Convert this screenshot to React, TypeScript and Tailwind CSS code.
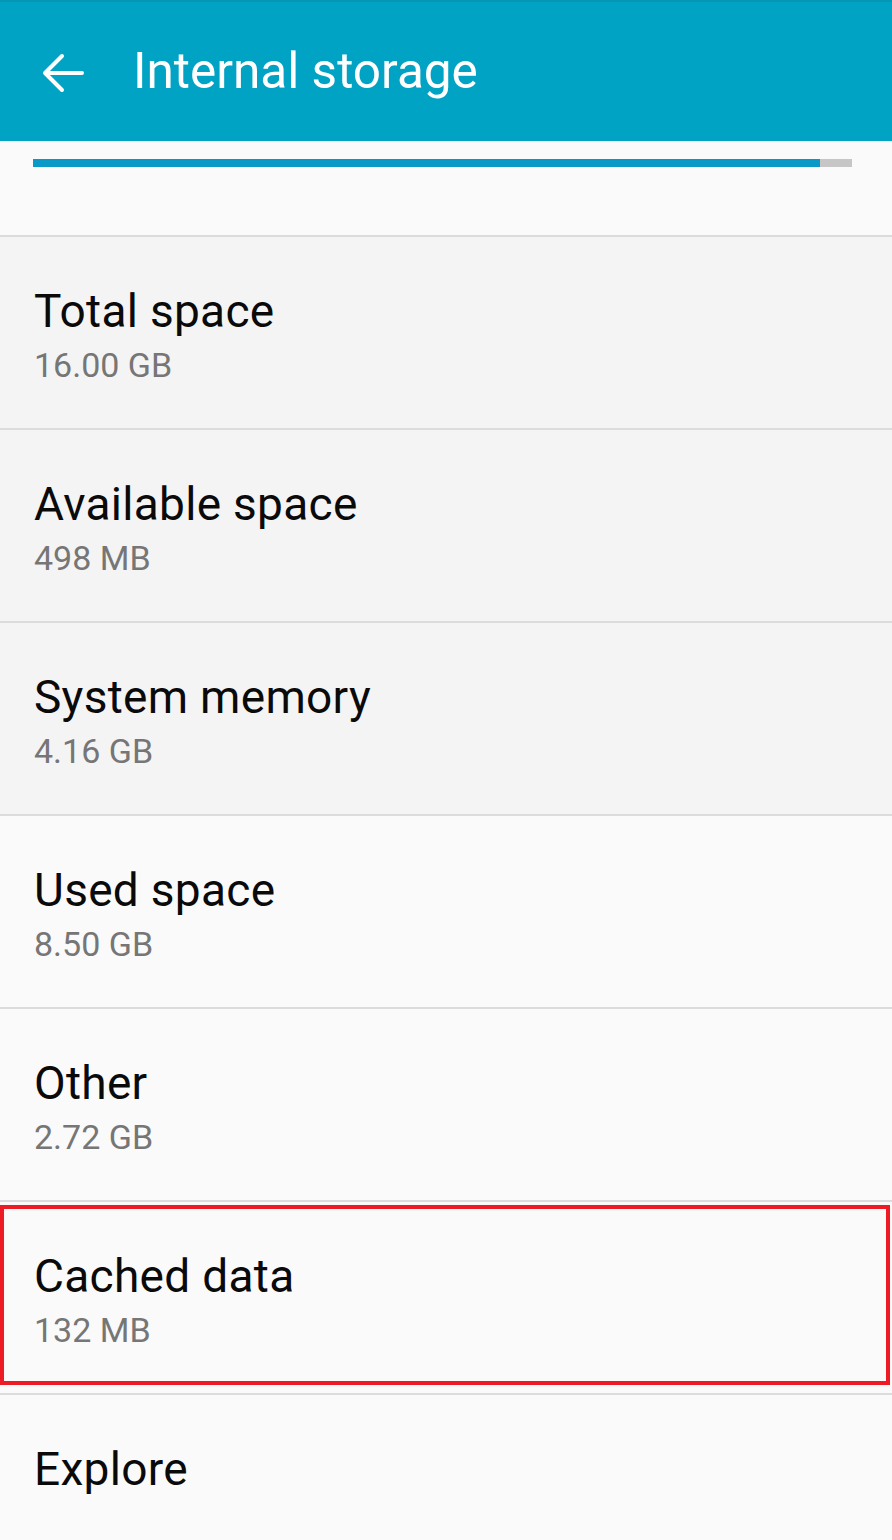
const rows = [
  { title: "Total space", value: "16.00 GB", shade: true },
  { title: "Available space", value: "498 MB", shade: true },
  { title: "System memory", value: "4.16 GB", shade: true },
  { title: "Used space", value: "8.50 GB", shade: false },
  { title: "Other", value: "2.72 GB", shade: false },
  { title: "Cached data", value: "132 MB", shade: false, marked: true },
  { title: "Explore", value: "", shade: false },
];

function BackArrow() {
  return (
    <svg width="42" height="40" viewBox="0 0 42 40" fill="none">
      <path
        d="M3 20H40M20 3L3 20L20 37"
        stroke="white"
        strokeWidth="4"
        strokeLinecap="round"
        strokeLinejoin="round"
      />
    </svg>
  );
}

export default function App() {
  return (
    <div className="w-[892px] h-[1540px] overflow-hidden bg-[#fafafa] font-['Roboto',sans-serif]">
      {/* Toolbar */}
      <header className="h-[141px] bg-[#00a3c3] border-t-2 border-[#0696b3] flex items-center">
        <div className="ml-[42px] mt-[2px]">
          <BackArrow />
        </div>
        <h1 className="ml-[49px] text-[49.5px] leading-none text-white">
          Internal storage
        </h1>
      </header>

      {/* Usage bar */}
      <div className="h-[94px] pt-[18px] pl-[33px] pr-[40px]">
        <div className="h-[8px] flex bg-[#c6c6c6]">
          <div className="w-[787px] bg-[#0899c6]" />
        </div>
      </div>

      {/* Rows */}
      {rows.map((row) => (
        <div
          key={row.title}
          className={
            "relative h-[193px] border-t-2 border-[#dcdcdc] pl-[34px] pt-[47px] " +
            (row.shade ? "bg-[#f4f4f4]" : "bg-[#fafafa]")
          }
        >
          <div className="text-[46px] leading-[54px] tracking-[0.3px] text-[#0a0a0a]">
            {row.title}
          </div>
          {row.value && (
            <div className="mt-[7px] text-[34px] leading-[40px] text-[#767676]">
              {row.value}
            </div>
          )}
          {row.marked && (
            <div className="absolute top-[3px] bottom-[8px] left-0 right-[2px] border-4 border-[#ed1c24]" />
          )}
        </div>
      ))}
    </div>
  );
}
